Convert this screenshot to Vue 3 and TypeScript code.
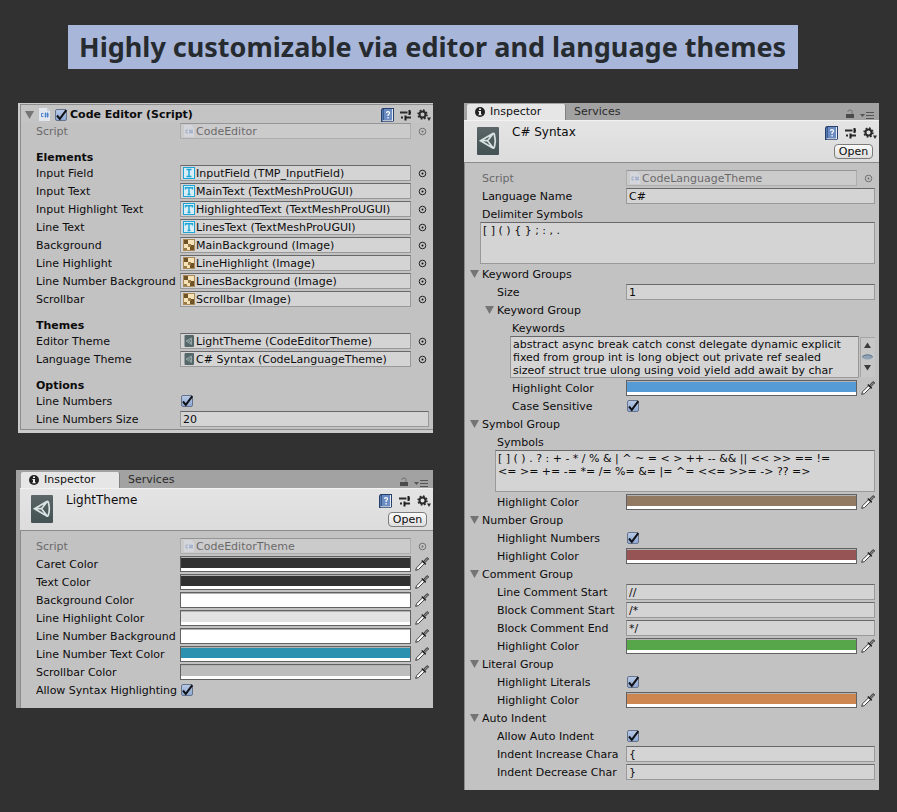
<script setup lang="ts">
import { reactive } from 'vue'

type ObjectIcon = 'script' | 'input' | 'text' | 'image' | 'asset'

interface HeadingRow { kind: 'heading'; label: string }
interface FoldRow { kind: 'fold'; label: string; indent: number }
interface ObjectRow { kind: 'object'; label: string; value: string; icon: ObjectIcon; indent: number; disabled?: boolean }
interface TextRow { kind: 'text'; label: string; value: string; indent: number }
interface AreaRow { kind: 'area'; label: string; value: string; indent: number; scroll?: boolean }
interface ColorRow { kind: 'color'; label: string; value: string; indent: number }
interface CheckRow { kind: 'check'; label: string; value: boolean; indent: number }
type Row = HeadingRow | FoldRow | ObjectRow | TextRow | AreaRow | ColorRow | CheckRow

interface Panel { id: string; type: 'component' | 'asset'; title: string; rows: Row[] }

const heading = (label: string): Row => ({ kind: 'heading', label })
const fold = (label: string, indent = 0): Row => ({ kind: 'fold', label, indent })
const object = (label: string, value: string, icon: ObjectIcon, disabled = false): Row =>
  ({ kind: 'object', label, value, icon, indent: 0, disabled })
const text = (label: string, value: string, indent = 0): Row => ({ kind: 'text', label, value, indent })
const area = (label: string, value: string, indent = 0, scroll = false): Row =>
  ({ kind: 'area', label, value, indent, scroll })
const color = (label: string, value: string, indent = 0): Row => ({ kind: 'color', label, value, indent })
const check = (label: string, indent = 0): Row => ({ kind: 'check', label, value: true, indent })

const columns = reactive<Panel[][]>([
  [
    {
      id: 'editor',
      type: 'component',
      title: 'Code Editor (Script)',
      rows: [
        object('Script', 'CodeEditor', 'script', true),
        heading('Elements'),
        object('Input Field', 'InputField (TMP_InputField)', 'input'),
        object('Input Text', 'MainText (TextMeshProUGUI)', 'text'),
        object('Input Highlight Text', 'HighlightedText (TextMeshProUGUI)', 'text'),
        object('Line Text', 'LinesText (TextMeshProUGUI)', 'text'),
        object('Background', 'MainBackground (Image)', 'image'),
        object('Line Highlight', 'LineHighlight (Image)', 'image'),
        object('Line Number Background', 'LinesBackground (Image)', 'image'),
        object('Scrollbar', 'Scrollbar (Image)', 'image'),
        heading('Themes'),
        object('Editor Theme', 'LightTheme (CodeEditorTheme)', 'asset'),
        object('Language Theme', 'C# Syntax (CodeLanguageTheme)', 'asset'),
        heading('Options'),
        check('Line Numbers'),
        text('Line Numbers Size', '20'),
      ],
    },
    {
      id: 'light',
      type: 'asset',
      title: 'LightTheme',
      rows: [
        object('Script', 'CodeEditorTheme', 'script', true),
        color('Caret Color', '#323132'),
        color('Text Color', '#323132'),
        color('Background Color', '#ffffff'),
        color('Line Highlight Color', '#e2e2e3'),
        color('Line Number Background', '#ffffff'),
        color('Line Number Text Color', '#2b91af'),
        color('Scrollbar Color', '#bdbdbe'),
        check('Allow Syntax Highlighting'),
      ],
    },
  ],
  [
    {
      id: 'syntax',
      type: 'asset',
      title: 'C# Syntax',
      rows: [
        object('Script', 'CodeLanguageTheme', 'script', true),
        text('Language Name', 'C#'),
        area('Delimiter Symbols', '[ ] ( ) { } ; : , .'),
        fold('Keyword Groups'),
        text('Size', '1', 1),
        fold('Keyword Group', 1),
        area(
          'Keywords',
          'abstract async break catch const delegate dynamic explicit\nfixed from group int is long object out private ref sealed\nsizeof struct true ulong using void yield add await by char',
          2,
          true,
        ),
        color('Highlight Color', '#559cd6', 2),
        check('Case Sensitive', 2),
        fold('Symbol Group'),
        area(
          'Symbols',
          '[ ] ( ) . ? : + - * / % & | ^ ~ = < > ++ -- && || << >> == !=\n<= >= += -= *= /= %= &= |= ^= <<= >>= -> ?? =>',
          1,
        ),
        color('Highlight Color', '#927a62', 1),
        fold('Number Group'),
        check('Highlight Numbers', 1),
        color('Highlight Color', '#965455', 1),
        fold('Comment Group'),
        text('Line Comment Start', '//', 1),
        text('Block Comment Start', '/*', 1),
        text('Block Comment End', '*/', 1),
        color('Highlight Color', '#57a64a', 1),
        fold('Literal Group'),
        check('Highlight Literals', 1),
        color('Highlight Color', '#cd864f', 1),
        fold('Auto Indent'),
        check('Allow Auto Indent', 1),
        text('Indent Increase Chara', '{', 1),
        text('Indent Decrease Char', '}', 1),
      ],
    },
  ],
])

const fieldId = (panel: Panel, index: number): string => `${panel.id}-${index}`
</script>

<template>
  <main class="page">
    <h1 class="banner">Highly customizable via editor and language themes</h1>

    <div class="columns">
      <div v-for="(column, c) in columns" :key="c" class="column">
        <section v-for="panel in column" :key="panel.id" class="panel" :class="[panel.type, panel.id]">
          <nav v-if="panel.type === 'asset'" class="tabs">
            <button class="tab active">
              <svg width="10" height="10" viewBox="0 0 10 10">
                <circle cx="5" cy="5" r="5" fill="#222" />
                <path d="M4 1.5h2v1.6H4zM3.4 4H6v3.2h.7v1H3.4v-1H4V5h-.6z" fill="#eee" />
              </svg>
              Inspector
            </button>
            <button class="tab">Services</button>
            <span class="spacer"></span>
            <svg class="lock" width="8" height="10" viewBox="0 0 8 10">
              <path d="M2 3V2.2Q2 1 4 1T6 2.2V5" fill="none" stroke="#707070" />
              <rect y="5" width="8" height="4" fill="#4b4b4b" />
            </svg>
            <svg width="14" height="8" viewBox="0 0 14 8">
              <path d="M0 3h5L2.500 6z" fill="#555" />
              <path d="M6 1.500h8M6 4.500h8M6 7.500h8" stroke="#555" />
            </svg>
          </nav>

          <header class="head">
            <template v-if="panel.type === 'component'">
              <svg width="9" height="8" viewBox="0 0 9 8"><path d="M0 0h9L4.500 8z" fill="#757575" /></svg>
              <svg class="file" width="11" height="13" viewBox="0 0 11 13">
                <path d="M0 0h8l3 3v10H0z" fill="#e2e6ee" />
                <path d="M8 0v3h3" fill="#c9cdd6" />
                <path d="M4.500 5.500h-2v3h2M6.500 4.500v5M8.500 4.500v5M5.500 6h4.500M5.500 8h4.500" fill="none" stroke="#4d84cc" />
              </svg>
              <span class="check">
                <input id="component-enabled" type="checkbox" checked />
                <svg width="14" height="14" viewBox="0 0 14 14"><path d="M3 7.500 5.800 10.800 12.300 2.200" /></svg>
              </span>
              <label class="component-title" for="component-enabled">{{ panel.title }}</label>
            </template>
            <template v-else>
              <svg width="22" height="29" viewBox="0 0 22 29">
                <defs>
                  <linearGradient :id="`g-${panel.id}`" x1="0" y1="0" x2="0" y2="1">
                    <stop offset="0" stop-color="#5a6668" />
                    <stop offset="1" stop-color="#445254" />
                  </linearGradient>
                </defs>
                <rect width="22" height="28" y="1" rx="1" :fill="`url(#g-${panel.id})`" />
                <path d="M3.500 14.700 15.800 7.500 Q17 7 17.400 8.500Q19.200 14.700 17.400 20.900Q17 22.500 15.800 21.900zM10.500 14.700H4M10.500 14.700l5.500-7M10.500 14.700l5.500 7" fill="none" stroke="#d8e2e2" stroke-width="1.700" />
              </svg>
              <h2 class="asset-title">{{ panel.title }}</h2>
            </template>
            <div class="tools">
              <div class="tool-row">
                <button class="tool" aria-label="Help">
                  <svg width="14" height="14" viewBox="0 0 14 14">
                    <path d="M0 1.500 1.500 0H13v12.500L12 14H0z" fill="#27406e" />
                    <path d="M1 1.500h1.500v11H1z" fill="#5578b0" />
                    <path d="M3 1h8v11H3z" fill="#6b8cc2" />
                    <path d="M11 1h1v11.500h-1zM1.500 12.300H12v.9H1.500z" fill="#e6eaf2" />
                    <path d="M5.500 5Q5.500 3.600 7 3.600T8.600 5Q8.600 5.800 7.100 6.700v1.400M7.100 9v1.400" fill="none" stroke="#fff" stroke-width="1.200" />
                  </svg>
                </button>
                <button class="tool" aria-label="Presets">
                  <svg width="12" height="12" viewBox="0 0 12 12">
                    <path d="M0 3.500h7.500M9 3.500h2M1 8.500h2M5 8.500h6" stroke="#2a2a2a" stroke-width="2" />
                    <path d="M9.500 1v5M5.500 6.500v5" stroke="#1d1d1d" stroke-width="2" />
                  </svg>
                </button>
                <button class="tool" aria-label="Settings">
                  <svg width="14" height="12" viewBox="0 0 14 12">
                    <circle cx="5.500" cy="5.500" r="3" fill="none" stroke="#2a2a2a" stroke-width="2" />
                    <circle cx="5.500" cy="5.500" r="4.400" fill="none" stroke="#2a2a2a" stroke-width="1.600" stroke-dasharray="1.700 1.756" />
                    <path d="M10 8.500h4L12 12z" fill="#2a2a2a" />
                  </svg>
                </button>
              </div>
              <button v-if="panel.type === 'asset'" class="open">Open</button>
            </div>
          </header>

          <div class="body">
            <template v-for="(row, i) in panel.rows" :key="i">
              <h3 v-if="row.kind === 'heading'" class="group">{{ row.label }}</h3>

              <button v-else-if="row.kind === 'fold'" class="fold" :class="`indent-${row.indent}`">
                <svg width="9" height="8" viewBox="0 0 9 8"><path d="M0 0h9L4.500 8z" fill="#757575" /></svg>
                <span>{{ row.label }}</span>
              </button>

              <div v-else-if="row.kind === 'area'" class="area" :class="`indent-${row.indent}`">
                <label :for="fieldId(panel, i)">{{ row.label }}</label>
                <div class="area-box">
                  <textarea :id="fieldId(panel, i)" v-model="row.value" rows="3" wrap="off" spellcheck="false"></textarea>
                  <svg v-if="row.scroll" class="scroll" width="16" height="42" viewBox="0 0 16 42">
                    <path d="M1 1h15v40H1z" fill="#c7c7c8" />
                    <path d="M1.500 1v40M1 1.500h15" stroke="#a5a5a6" fill="none" />
                    <path d="M5 12h7L8.500 6.500zM5 29h7l-3.500 5.500z" fill="#3c3c3e" />
                    <ellipse cx="8.500" cy="21" rx="5.500" ry="2.500" fill="#8fa3b4" />
                    <path d="M3.500 20.500q5-3.500 10 0" stroke="#5f7488" fill="none" />
                  </svg>
                </div>
              </div>

              <div v-else class="row" :class="[`indent-${row.indent}`, { disabled: row.kind === 'object' && row.disabled }]">
                <label class="name" :for="fieldId(panel, i)">{{ row.label }}</label>

                <template v-if="row.kind === 'object'">
                  <button :id="fieldId(panel, i)" class="object" :disabled="row.disabled">
                    <svg v-if="row.icon === 'script'" width="12" height="12" viewBox="0 0 12 12">
                      <path d="M1 0h7l3 3v9H1z" fill="#e8eaf4" />
                      <path d="M5 5H3v3h2M7 4.500v4M9 4.500v4M6 5.700h4M6 7.500h4" fill="none" stroke="#7d9bd0" />
                    </svg>
                    <svg v-else-if="row.icon === 'input' || row.icon === 'text'" width="12" height="12" viewBox="0 0 12 12">
                      <rect x=".5" y=".5" width="11" height="11" fill="#d9eef6" stroke="#1fa5d5" />
                      <path v-if="row.icon === 'input'" d="M3.500 2.500h5M3.500 9.500h5M6 2.500v7" stroke="#1fa5d5" stroke-width="1.500" />
                      <path v-else d="M2.500 4.500V2.800h7v1.700M6 3v6.500M4.500 9.500h3" fill="none" stroke="#1fa5d5" stroke-width="1.400" />
                    </svg>
                    <svg v-else-if="row.icon === 'image'" width="12" height="12" viewBox="0 0 12 12">
                      <rect width="12" height="12" fill="#a98a58" />
                      <rect x="1" y="1" width="10" height="10" fill="#f5e2b8" />
                      <path d="M1 1h4v4H1zM7 6h4v5H7z" fill="#6f5226" />
                      <path d="M5 5h3v3H5zM1 9h3v2H1z" fill="#9a7a44" />
                    </svg>
                    <svg v-else width="12" height="12" viewBox="0 0 12 12">
                      <rect x="1.500" width="9.500" height="12" rx="1" fill="#56676a" />
                      <path d="M3 6 8.500 3v6.500zM6.500 6H3M6.500 6l2-2.500M6.500 6l2 3" fill="none" stroke="#93a4a6" />
                    </svg>
                    <span>{{ row.value }}</span>
                  </button>
                  <button class="pick" aria-label="Select object" :disabled="row.disabled">
                    <svg width="9" height="9" viewBox="0 0 9 9">
                      <circle cx="4.500" cy="4.500" r="3.300" fill="none" stroke="#222" />
                      <circle cx="4.500" cy="4.500" r="1" fill="#111" />
                    </svg>
                  </button>
                </template>

                <input v-else-if="row.kind === 'text'" :id="fieldId(panel, i)" v-model="row.value" class="text" type="text" />

                <template v-else-if="row.kind === 'color'">
                  <span class="swatch"><input :id="fieldId(panel, i)" v-model="row.value" type="color" /></span>
                  <button class="dropper" aria-label="Pick color">
                    <svg width="14" height="14" viewBox="0 0 14 14">
                      <path d="M.7 13.300 1.500 10.800 7.700 4.600 9.600 6.500 3.400 12.600z" fill="#fff" stroke="#2c2c2c" stroke-width=".9" />
                      <path d="M8.300 4.800 11.300 1.200Q12.800 .3 13.300 1.300T12.600 3L9.300 6z" fill="#8a8a8a" stroke="#2a2a2a" stroke-width=".9" />
                      <path d="M6.800 3.500 10.700 7.400" stroke="#222" stroke-width="1.500" />
                    </svg>
                  </button>
                </template>

                <span v-else class="check">
                  <input :id="fieldId(panel, i)" v-model="row.value" type="checkbox" />
                  <svg v-if="row.value" width="14" height="14" viewBox="0 0 14 14"><path d="M3 7.500 5.800 10.800 12.300 2.200" /></svg>
                </span>
              </div>
            </template>
          </div>
        </section>
      </div>
    </div>
  </main>
</template>

<style>
body {
  margin: 0;
  background: #323132;
}
</style>

<style scoped>
.page {
  box-sizing: border-box;
  min-height: 100vh;
  padding: 25px 18px 22px 16px;
  color: #0c0c0c;
  font: 11px/16px "DejaVu Sans", Verdana, sans-serif;
}
.page * {
  box-sizing: border-box;
}
button,
input,
textarea {
  margin: 0;
  padding: 0;
  border: 0;
  border-radius: 0;
  background: none;
  color: inherit;
  font: inherit;
  outline: none;
}
svg {
  display: block;
  flex: none;
}
.banner {
  margin: 0 81px 34px 52px;
  padding: 0 11px;
  background: #a8b6da;
  color: #262b2f;
  font: bold 27px/44px "Noto Sans", sans-serif;
  white-space: nowrap;
}
.columns {
  display: grid;
  grid-template-columns: 417fr 415fr;
  align-items: start;
  gap: 31px;
}
.column {
  display: flex;
  flex-direction: column;
  gap: 37px;
  min-width: 0;
}
.panel {
  background: #c3c2c3;
}
.panel.component {
  margin-left: 2px;
  padding: 1px 0 3px 2px;
  background: #cbcbcc;
}
.panel.light {
  padding-top: 1px;
  background: #a2a2a3;
}

/* tab strip */
.tabs {
  display: flex;
  align-items: flex-end;
  height: 17px;
  padding: 0 5px 0 3px;
  background: #a2a2a3;
}
.light .tabs {
  padding-left: 5px;
}
.tab {
  height: 16px;
  padding: 0 8px;
  color: #2a2a2a;
}
.tab.active {
  display: flex;
  align-items: center;
  gap: 5px;
  width: 99px;
  border-right: 1px solid #808080;
  border-radius: 2px 2px 0 0;
  background: #e6e6e7;
  color: #111;
}
.spacer {
  flex: 1;
}
.tabs > svg {
  margin-bottom: 1px;
}
.lock {
  margin-right: 6px;
}

/* headers */
.head {
  display: flex;
}
.component .head {
  align-items: center;
  height: 19px;
  padding: 1px 2px 0 4px;
  border-top: 1px solid #8c8c8d;
  border-left: 1px solid #8c8c8d;
  background: #c4c4c5;
}
.asset .head {
  height: 43px;
  padding: 5px 2px 0 13px;
  border-top: 1px solid #f2f2f2;
  border-bottom: 1px solid #8b8b8c;
  background: linear-gradient(#e4e4e5, #dcdcdd);
}
.light .head {
  margin-left: 4px;
  padding-left: 11px;
}
.file {
  margin: 0 4px 0 5px;
}
.component-title {
  margin-left: 2px;
  padding-top: 1px;
  font-weight: bold;
}
.asset-title {
  margin: 0 0 0 13px;
  font: 12px/12px "DejaVu Sans", Verdana, sans-serif;
}
.tools {
  margin-left: auto;
}
.tool-row {
  display: flex;
  align-items: center;
  gap: 6px;
}
.component .tool-row {
  gap: 5px;
}
.tool {
  display: flex;
}
.open {
  display: block;
  width: 39px;
  height: 15px;
  margin: 4px 0 0 9px;
  border: 1px solid #7c7c7d;
  border-radius: 4px;
  background: linear-gradient(#fafafa, #dedede);
  line-height: 13px;
}

/* property rows */
.body {
  padding: 7px 4px 8px 17px;
  border-left: 1px solid #8c8c8d;
  background: #c3c2c3;
}
.component .body {
  padding: 0 4px 0 15px;
  border-bottom: 1px solid #8c8c8d;
}
.light .body {
  margin-left: 4px;
  padding-left: 15px;
}
.row {
  display: flex;
  align-items: center;
  height: 16px;
  margin-bottom: 2px;
}
.name {
  flex: none;
  width: 144px;
  height: 16px;
  padding-top: 1px;
  overflow: hidden;
  white-space: nowrap;
}
.indent-1 {
  padding-left: 15px;
}
.indent-2 {
  padding-left: 30px;
}
.indent-1 .name {
  width: 129px;
}
.indent-2 .name {
  width: 114px;
}
.disabled {
  opacity: 0.5;
}
.group {
  height: 16px;
  margin: 10px 0 0;
  padding-top: 1px;
  font: bold 11px/16px "DejaVu Sans", Verdana, sans-serif;
}
.fold {
  display: flex;
  align-items: center;
  gap: 3px;
  height: 16px;
  margin: 0 0 2px -12px;
}
.fold span,
.object span {
  padding-top: 2px;
}
.object,
.text,
textarea {
  border: 1px solid #99999a;
  border-top-color: #68686a;
  background: #d5d4d5;
}
.object {
  display: flex;
  flex: 1;
  align-items: center;
  gap: 1px;
  min-width: 0;
  height: 16px;
  padding-left: 2px;
  line-height: 14px;
  text-align: left;
  white-space: nowrap;
}
.pick,
.dropper {
  display: flex;
  flex: none;
  justify-content: center;
  width: 14px;
  margin-left: 4px;
}
.text {
  flex: 1;
  min-width: 0;
  height: 16px;
  padding: 1px 2px 0;
}
.swatch {
  flex: 1;
  height: 16px;
  border: 1px solid #626264;
  background: #fff;
}
.swatch input {
  display: block;
  width: 100%;
  height: 11px;
  border-top: 1px solid rgba(0, 0, 0, 0.3);
  appearance: none;
}
.swatch input::-webkit-color-swatch-wrapper {
  padding: 0;
}
.swatch input::-webkit-color-swatch {
  border: 0;
  border-radius: 0;
}
.check {
  display: grid;
  width: 14px;
  height: 14px;
}
.check > * {
  grid-area: 1 / 1;
}
.check input {
  width: 12px;
  height: 12px;
  margin: 1px;
  border: 1px solid #66738c;
  border-radius: 2px;
  background: linear-gradient(#b7c8e4, #8fa9d4);
  appearance: none;
}
.check svg {
  fill: none;
  stroke: #101216;
  stroke-width: 2;
  pointer-events: none;
}
.area {
  margin-bottom: 2px;
}
.area label {
  display: block;
  height: 16px;
  padding-top: 1px;
}
.area-box {
  display: flex;
  height: 42px;
  margin-left: -2px;
}
textarea {
  flex: 1;
  min-width: 0;
  height: 42px;
  padding: 1px 2px 0;
  overflow: hidden;
  line-height: 13px;
  resize: none;
}
</style>
